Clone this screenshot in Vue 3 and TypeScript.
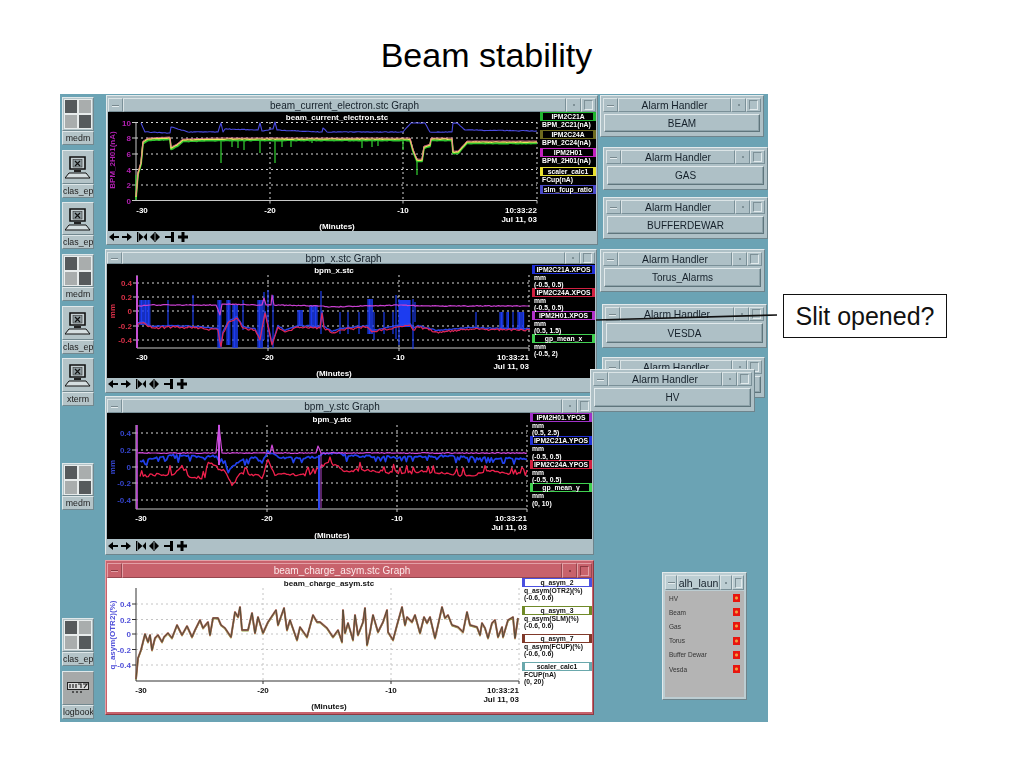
<template>
  <div class="page">
    <h1 class="heading">Beam stability</h1>

    <div class="desktop">
      <!-- desktop icons -->
      <div v-for="icon in icons" :key="icon.top" class="desk-icon" :style="place(62, icon.top, 32, icon.h)">
        <div class="icon-face" :class="icon.kind">
          <div v-if="icon.kind === 'medm'" class="medm-grid">
            <i class="dark"></i><i></i><i></i><i class="dark"></i>
          </div>
          <svg v-else-if="icon.kind === 'term'" width="26" height="26" viewBox="0 0 26 26">
            <path d="M5 3H20V15H5Z" fill="#c4cfd2" stroke="#111" stroke-width="1.6" />
            <rect x="8" y="5.5" width="9" height="7.5" fill="#8d9a9e" stroke="#333" stroke-width="0.6" />
            <path d="M10 7L15 12M15 7L10 12" stroke="#111" stroke-width="1.2" />
            <path d="M9 16H16V18H9Z" fill="#222" />
            <path d="M4 19H21L25 24H0Z" fill="#d5dee0" stroke="#111" stroke-width="1" />
          </svg>
          <svg v-else width="22" height="12" viewBox="0 0 22 12">
            <rect x="0.5" y="0.5" width="21" height="7" fill="#d8d8d8" stroke="#222" />
            <path d="M3 2V6M6 2V6M9 2V6M11 2H14V6M16 2H20L17 6" fill="none" stroke="#222" stroke-width="1.2" />
            <path d="M5 10H7M9 10H11M13 10H15" stroke="#333" stroke-width="1.4" />
          </svg>
        </div>
        <div class="icon-label">{{ icon.label }}</div>
      </div>

      <!-- strip chart windows -->
      <div
        v-for="g in graphs"
        :key="g.title"
        class="window graph"
        :class="{ alert: g.alert }"
        :style="place(g.box[0], g.box[1], g.box[2], g.box[3])"
      >
        <div class="titlebar" :style="{ height: g.titleH + 'px' }">
          <span class="wm-btn menu"><i></i></span>
          <span class="wm-title">{{ g.title }}</span>
          <span class="wm-btn dot"><i></i></span>
          <span class="wm-btn max"><i></i></span>
        </div>

        <div class="plot-row" :class="{ light: g.alert }" :style="{ height: g.view[3] + 'px' }">
          <svg
            class="chart"
            :width="g.view[2]"
            :height="g.view[3]"
            :viewBox="g.view.join(' ')"
          >
            <text class="chart-title" :x="g.titleAt[0]" :y="g.titleAt[1]">{{ g.chartTitle }}</text>
            <line
              v-for="t in g.yTicks"
              :key="t[0]"
              class="grid"
              :x1="g.axisX"
              :x2="g.right"
              :y1="t[1]"
              :y2="t[1]"
            />
            <line
              v-for="x in g.vLines"
              :key="x"
              class="grid"
              :x1="x"
              :x2="x"
              :y1="g.top"
              :y2="g.bottom"
            />
            <line class="axis" :x1="g.axisX" :x2="g.axisX" :y1="g.top" :y2="g.bottom" />
            <line class="axis" :x1="g.axisX" :x2="g.right" :y1="g.bottom" :y2="g.bottom" />
            <line
              v-for="t in g.yTicks"
              :key="'m' + t[0]"
              class="axis"
              :x1="g.axisX - 4"
              :x2="g.axisX"
              :y1="t[1]"
              :y2="t[1]"
            />
            <line
              v-for="x in g.vLines"
              :key="'b' + x"
              class="axis"
              :x1="x"
              :x2="x"
              :y1="g.bottom"
              :y2="g.bottom + 3"
            />
            <path
              v-for="(tr, i) in g.traces"
              :key="i"
              :d="tr.d"
              :stroke="tr.color"
              :stroke-width="tr.width"
              fill="none"
              stroke-linejoin="round"
            />
            <text
              v-for="t in g.yTicks"
              :key="'l' + t[0]"
              class="y-label"
              :x="g.axisX - 5"
              :y="t[1] + 3"
              :style="{ fill: g.axisColor }"
            >{{ t[0] }}</text>
            <text
              class="axis-name"
              :style="{ fill: g.axisColor }"
              :transform="`rotate(-90 ${g.axisName[1]} ${g.axisName[2]})`"
              :x="g.axisName[1]"
              :y="g.axisName[2]"
            >{{ g.axisName[0] }}</text>
            <text
              v-for="t in g.xLabels"
              :key="t[0]"
              class="x-label"
              :x="t[1]"
              :y="g.bottom + 12"
            >{{ t[0] }}</text>
            <text class="x-label" :x="g.titleAt[0]" :y="g.minutesY">(Minutes)</text>
            <text class="stamp" :x="g.right" :y="g.bottom + 12">{{ g.time }}</text>
            <text class="stamp" :x="g.right" :y="g.bottom + 21">Jul 11, 03</text>
          </svg>

          <ul class="legend" :style="{ paddingTop: g.legendTop + 'px' }">
            <li
              v-for="item in g.legend"
              :key="item.name"
              class="legend-item"
              :style="{ height: g.legendStep + 'px' }"
            >
              <div class="legend-box" :style="{ borderColor: item.color }">{{ item.name }}</div>
              <div v-for="l in item.lines" :key="l" class="legend-line">{{ l }}</div>
            </li>
          </ul>
        </div>

        <div v-if="!g.alert" class="toolbar">
          <svg v-for="(b, i) in toolButtons" :key="i" class="tool" :class="{ gap: i === 2 || i === 4 }" width="10" height="10" viewBox="0 0 10 10">
            <path :d="b" fill="#000" />
          </svg>
        </div>
      </div>

      <!-- alarm handler windows -->
      <div
        v-for="a in alarms"
        :key="a.label + a.box[1]"
        class="window alarm"
        :style="place(a.box[0], a.box[1], a.box[2], a.box[3])"
      >
        <div class="titlebar alarm-bar">
          <span class="wm-btn menu"><i></i></span>
          <span class="wm-title">Alarm Handler</span>
          <span class="wm-btn dot"><i></i></span>
          <span class="wm-btn max"><i></i></span>
        </div>
        <div class="alarm-button">{{ a.label }}</div>
      </div>

      <!-- launcher -->
      <div class="window launcher" :style="place(662, 572, 85, 128)">
        <div class="titlebar launcher-bar">
          <span class="wm-btn menu"><i></i></span>
          <span class="wm-title">alh_laun</span>
          <span class="wm-btn dot"><i></i></span>
          <span class="wm-btn max"><i></i></span>
        </div>
        <div class="launcher-body">
          <div v-for="row in launcherRows" :key="row" class="launcher-row">
            <span>{{ row }}</span>
            <b class="led"></b>
          </div>
        </div>
      </div>
    </div>

    <!-- annotation on top of the picture -->
    <svg class="leader" width="182" height="10" viewBox="0 0 182 10">
      <line x1="0" y1="8" x2="181" y2="3" stroke="#111" stroke-width="1.6" />
    </svg>
    <div class="callout">Slit opened?</div>
  </div>
</template>

<script setup lang="ts">
type Pt = [number, number]

interface Trace {
  d: string
  color: string
  width: number
}

interface LegendItem {
  name: string
  color: string
  lines: string[]
}

interface Graph {
  title: string
  chartTitle: string
  box: number[]
  titleH: number
  view: number[]
  alert: boolean
  axisX: number
  top: number
  bottom: number
  right: number
  axisColor: string
  axisName: [string, number, number]
  yTicks: [string, number][]
  vLines: number[]
  xLabels: [string, number][]
  titleAt: Pt
  minutesY: number
  time: string
  legendTop: number
  legendStep: number
  legend: LegendItem[]
  traces: Trace[]
}

// desktop starts at 60,94 in the screenshot
function place(l: number, t: number, w: number, h: number) {
  return { left: l - 60 + 'px', top: t - 94 + 'px', width: w + 'px', height: h + 'px' }
}

function seeded(seed: number) {
  let s = seed * 7919
  return () => {
    s = (s * 16807) % 2147483647
    return s / 2147483647
  }
}

// polyline through keypoints with sampled noise; burst adds the odd short spike
function noisy(keys: Pt[], amp: number, seed: number, step = 1.5, dy = 0, burst = 0): string {
  const rnd = seeded(seed)
  let d = `M${keys[0][0]} ${keys[0][1] + dy}`
  for (let i = 1; i < keys.length; i++) {
    const [x0, y0] = keys[i - 1]
    const [x1, y1] = keys[i]
    const n = Math.max(1, Math.floor((x1 - x0) / step))
    for (let j = 1; j <= n; j++) {
      const f = j / n
      let y = y0 + (y1 - y0) * f + (j === n ? 0 : (rnd() - 0.5) * amp)
      if (burst && rnd() < 0.16) y -= burst * (0.4 + rnd() * 0.6)
      d += `L${(x0 + (x1 - x0) * f).toFixed(1)} ${(y + dy).toFixed(1)}`
    }
  }
  return d
}

function bars(list: number[][]): string {
  return list.map(([x, a, b]) => `M${x} ${a}V${b}`).join('')
}

function comb(from: number, to: number, a: number, b: number, step = 1.4): number[][] {
  const out: number[][] = []
  for (let x = from; x <= to; x += step) out.push([x, a, b])
  return out
}

const beamYellow: Pt[] = [
  [136, 197], [138, 173], [141, 163], [143, 142], [148, 139], [170, 138], [171, 148], [177, 145],
  [183, 140], [218, 139], [355, 139], [410, 139], [413, 150], [417, 160], [422, 160], [424, 147],
  [430, 145], [431, 139], [452, 139], [453, 152], [458, 152], [467, 142], [537, 142],
]
const beamBlue: Pt[] = [
  [141, 123], [145, 132], [170, 133], [171, 127], [175, 128], [188, 132], [218, 132], [221, 123],
  [223, 132], [225, 129], [258, 130], [260, 123], [262, 131], [273, 129], [275, 122], [277, 130],
  [322, 132], [323, 128], [327, 132], [403, 132], [411, 123], [413, 123], [425, 123], [430, 132],
  [452, 132], [453, 123], [457, 123], [465, 130], [537, 131],
]
const beamDrops = bars([
  [136, 175, 200], [221, 140, 163], [232, 140, 147], [238, 140, 148], [244, 140, 150], [260, 140, 153],
  [275, 140, 163], [282, 140, 147], [291, 140, 147], [312, 140, 143], [362, 140, 148], [372, 140, 147],
  [378, 140, 146], [403, 140, 150], [417, 158, 175],
])

const xRed: Pt[] = [
  [137, 325], [142, 323], [152, 328], [172, 327], [195, 328], [218, 330], [221, 347], [223, 333],
  [228, 323], [237, 318], [243, 328], [255, 330], [260, 340], [265, 313], [272, 345], [278, 327],
  [285, 332], [298, 327], [320, 328], [322, 313], [324, 328], [332, 333], [340, 330], [367, 327],
  [372, 332], [397, 327], [410, 325], [413, 330], [418, 327], [437, 332], [470, 329], [507, 330], [530, 330],
]
const xMagenta: Pt[] = [
  [138, 306], [150, 305], [216, 305], [220, 315], [222, 304], [262, 305], [264, 298], [266, 305],
  [271, 305], [272, 295], [274, 305], [320, 306], [330, 307], [400, 305], [420, 306], [529, 306],
]
const xBlueBars = bars([
  ...comb(140, 150, 300, 325), [168, 300, 325], [193, 295, 325], ...comb(218, 221, 300, 348),
  ...comb(227, 230, 300, 345), ...comb(233, 238, 305, 348), [243, 300, 330], ...comb(258, 263, 300, 348),
  [264, 292, 340], [268, 290, 348], [273, 295, 348], ...comb(298, 303, 310, 325), ...comb(310, 318, 305, 328),
  [321, 291, 334], [340, 312, 334], [348, 312, 334], [359, 312, 334], ...comb(368, 373, 299, 334),
  [374, 312, 340], [384, 312, 334], [393, 312, 334], [396, 295, 339], [399, 299, 345],
  ...comb(400, 410, 300, 327, 1), [413, 299, 349], [415, 302, 322], [476, 312, 327],
  ...comb(500, 503, 312, 330), ...comb(507, 509, 312, 330), [513, 312, 330], ...comb(518, 524, 312, 330),
])

const yRed: Pt[] = [
  [140, 475], [160, 473], [165, 474], [175, 472], [182, 464], [186, 475], [195, 476], [205, 476], [210, 462],
  [220, 468], [225, 470], [232, 484], [240, 472], [255, 473], [262, 477], [268, 458], [275, 474], [285, 472],
  [300, 473], [315, 472], [325, 462], [335, 463], [345, 470], [360, 468], [400, 472], [420, 470], [440, 472],
  [470, 474], [490, 470], [510, 472], [527, 473],
]
const yBlue: Pt[] = [
  [140, 462], [160, 458], [170, 456], [200, 458], [218, 457], [225, 462], [230, 470], [240, 462], [255, 458],
  [262, 464], [268, 452], [280, 459], [300, 459], [317, 458], [322, 455], [335, 454], [350, 457], [400, 458],
  [440, 457], [480, 459], [527, 460],
]
const yMagenta: Pt[] = [
  [138, 453], [216, 453], [219, 425], [222, 453], [270, 453], [272, 445], [274, 453], [316, 453], [318, 446],
  [321, 453], [527, 453],
]

const asym: Pt[] = [
  [136, 679], [138, 658], [141, 650], [145, 634], [148, 642], [150, 635], [152, 650], [155, 638], [158, 635],
  [162, 642], [164, 637], [168, 633], [172, 638], [177, 625], [182, 635], [187, 626], [192, 637], [195, 630],
  [200, 620], [203, 628], [208, 622], [210, 635], [213, 618], [218, 618], [221, 625], [225, 628], [231, 637],
  [235, 612], [238, 617], [240, 607], [242, 630], [248, 630], [252, 613], [255, 633], [258, 617], [263, 633],
  [268, 622], [276, 610], [278, 625], [284, 608], [287, 630], [290, 620], [297, 640], [300, 627], [307, 637],
  [313, 615], [317, 622], [320, 622], [327, 628], [333, 637], [338, 630], [342, 642], [343, 610], [345, 633],
  [348, 623], [353, 640], [355, 615], [358, 635], [363, 622], [365, 608], [367, 645], [370, 632], [373, 615],
  [378, 632], [383, 622], [387, 610], [388, 632], [393, 640], [397, 625], [402, 607], [405, 625], [407, 617],
  [412, 622], [415, 615], [420, 633], [424, 617], [427, 623], [430, 617], [435, 638], [438, 625], [442, 607],
  [445, 618], [448, 615], [452, 625], [458, 627], [463, 632], [467, 612], [470, 625], [477, 627], [480, 635],
  [482, 623], [485, 628], [488, 638], [492, 623], [495, 620], [498, 637], [502, 627], [503, 637], [508, 620],
  [513, 617], [515, 638], [518, 618],
]

const graphs: Graph[] = [
  {
    title: 'beam_current_electron.stc Graph',
    chartTitle: 'beam_current_electron.stc',
    box: [106, 95, 492, 150],
    titleH: 14,
    view: [108, 112, 432, 119],
    alert: false,
    axisX: 136,
    top: 122,
    bottom: 200.5,
    right: 537,
    axisColor: '#b020b0',
    axisName: ['BPM_2H01(nA)', 115, 160],
    yTicks: [['10', 122.5], ['8', 138], ['6', 154], ['4', 169.5], ['2', 185], ['0', 200.5]],
    vLines: [270, 403, 537],
    xLabels: [['-30', 142], ['-20', 270], ['-10', 403]],
    titleAt: [337, 120],
    minutesY: 229,
    time: '10:33:22',
    legendTop: 0,
    legendStep: 18.2,
    legend: [
      { name: 'IPM2C21A', color: '#1fb52f', lines: ['BPM_2C21(nA)'] },
      { name: 'IPM2C24A', color: '#6e6a1e', lines: ['BPM_2C24(nA)'] },
      { name: 'IPM2H01', color: '#c420c0', lines: ['BPM_2H01(nA)'] },
      { name: 'scaler_calc1', color: '#e8e030', lines: ['FCup(nA)'] },
      { name: 'slm_fcup_ratio', color: '#4a4ac8', lines: [] },
    ],
    traces: [
      { d: noisy(beamBlue, 0.7, 11), color: '#4b4be0', width: 1.1 },
      { d: beamDrops, color: '#2fc42f', width: 1.3 },
      { d: noisy(beamYellow, 0.6, 12, 1.5, 1.4), color: '#2fc42f', width: 1.8 },
      { d: noisy(beamYellow, 0.5, 13), color: '#e8e85a', width: 1.4 },
      { d: noisy(beamYellow, 0.3, 14, 2, -1), color: '#ef6f9a', width: 0.8 },
    ],
  },
  {
    title: 'bpm_x.stc Graph',
    chartTitle: 'bpm_x.stc',
    box: [105, 249, 492, 144],
    titleH: 12,
    view: [107, 264, 425, 114],
    alert: false,
    axisX: 137,
    top: 275,
    bottom: 348,
    right: 529,
    axisColor: '#d83048',
    axisName: ['mm', 115, 311],
    yTicks: [['0.4', 283], ['0.2', 297], ['0', 311], ['-0.2', 326], ['-0.4', 340]],
    vLines: [268, 399, 529],
    xLabels: [['-30', 142], ['-20', 268], ['-10', 399]],
    titleAt: [334, 273],
    minutesY: 376,
    time: '10:33:21',
    legendTop: 1,
    legendStep: 23,
    legend: [
      { name: 'IPM2C21A.XPOS', color: '#2030d8', lines: ['mm', '(-0.5, 0.5)'] },
      { name: 'IPM2C24A.XPOS', color: '#d02040', lines: ['mm', '(-0.5, 0.5)'] },
      { name: 'IPM2H01.XPOS', color: '#b030c8', lines: ['mm', '(0.5, 1.5)'] },
      { name: 'gp_mean_x', color: '#40d050', lines: ['mm', '(-0.5, 2)'] },
    ],
    traces: [
      { d: xBlueBars, color: '#1c3cf0', width: 1.2 },
      { d: noisy(xRed, 1, 21, 1.5, -1.5), color: '#2a44e8', width: 1.4 },
      { d: noisy(xRed, 2.4, 22), color: '#e0265a', width: 1.2 },
      { d: noisy(xMagenta, 0.8, 23), color: '#c840d0', width: 1.2 },
      { d: 'M137 276V348', color: '#d050e0', width: 1.8 },
    ],
  },
  {
    title: 'bpm_y.stc Graph',
    chartTitle: 'bpm_y.stc',
    box: [105, 396, 489, 159],
    titleH: 14,
    view: [107, 413, 423, 126],
    alert: false,
    axisX: 136,
    top: 425,
    bottom: 509,
    right: 527,
    axisColor: '#3444cc',
    axisName: ['mm', 115, 467],
    yTicks: [['0.4', 433], ['0.2', 450], ['0', 467], ['-0.2', 483], ['-0.4', 500]],
    vLines: [267, 397, 527],
    xLabels: [['-30', 141], ['-20', 267], ['-10', 397]],
    titleAt: [332, 422],
    minutesY: 538,
    time: '10:33:21',
    legendTop: 0,
    legendStep: 23.4,
    legend: [
      { name: 'IPM2H01.YPOS', color: '#a030c8', lines: ['mm', '(0.5, 2.5)'] },
      { name: 'IPM2C21A.YPOS', color: '#2030d8', lines: ['mm', '(-0.5, 0.5)'] },
      { name: 'IPM2C24A.YPOS', color: '#d02040', lines: ['mm', '(-0.5, 0.5)'] },
      { name: 'gp_mean_y', color: '#40d050', lines: ['mm', '(0, 10)'] },
    ],
    traces: [
      { d: noisy(yRed, 3, 31, 1.6, 1.5, 8), color: '#f0204c', width: 1.3 },
      { d: noisy(yBlue, 2.2, 32, 1.6, -1, -6), color: '#2040ee', width: 1.7 },
      { d: noisy(yMagenta, 0.8, 33), color: '#d048d8', width: 1.2 },
      { d: 'M137 425V509', color: '#c850e0', width: 1.6 },
      { d: 'M319 455V510', color: '#3048f0', width: 2 },
      { d: 'M321 453V508', color: '#c850e0', width: 0.9 },
      { d: 'M219 425V465', color: '#c850e0', width: 2 },
    ],
  },
  {
    title: 'beam_charge_asym.stc Graph',
    chartTitle: 'beam_charge_asym.stc',
    box: [105, 560, 489, 155],
    titleH: 15,
    view: [107, 578, 415, 134],
    alert: true,
    axisX: 136,
    top: 588,
    bottom: 681,
    right: 519,
    axisColor: '#5050d8',
    axisName: ['q_asym(OTR2)(%)', 115, 635],
    yTicks: [['0.4', 604], ['0.2', 619.5], ['0', 634], ['-0.2', 649.5], ['-0.4', 665]],
    vLines: [263, 391, 519],
    xLabels: [['-30', 141], ['-20', 263], ['-10', 391]],
    titleAt: [329, 586],
    minutesY: 709,
    time: '10:33:21',
    legendTop: 0,
    legendStep: 28,
    legend: [
      { name: 'q_asym_2', color: '#4a50e0', lines: ['q_asym(OTR2)(%)', '(-0.6, 0.6)'] },
      { name: 'q_asym_3', color: '#708a28', lines: ['q_asym(SLM)(%)', '(-0.6, 0.6)'] },
      { name: 'q_asym_7', color: '#80392a', lines: ['q_asym(FCUP)(%)', '(-0.6, 0.6)'] },
      { name: 'scaler_calc1', color: '#6aa8ac', lines: ['FCUP(nA)', '(0, 20)'] },
    ],
    traces: [
      { d: noisy(asym, 0, 41, 3, 0.7), color: '#8fa03c', width: 1.6 },
      { d: noisy(asym, 0, 42, 3), color: '#b0695a', width: 2 },
      { d: noisy(asym, 0, 43, 3), color: '#4a4a36', width: 0.9 },
    ],
  },
]

const icons = [
  { kind: 'medm', label: 'medm', top: 97, h: 48 },
  { kind: 'term', label: 'clas_ep', top: 150, h: 48 },
  { kind: 'term', label: 'clas_ep', top: 202, h: 47 },
  { kind: 'medm', label: 'medm', top: 254, h: 47 },
  { kind: 'term', label: 'clas_ep', top: 306, h: 48 },
  { kind: 'term', label: 'xterm', top: 358, h: 48 },
  { kind: 'medm', label: 'medm', top: 463, h: 47 },
  { kind: 'medm', label: 'clas_ep', top: 618, h: 48 },
  { kind: 'book', label: 'logbook', top: 671, h: 48 },
]

const alarms = [
  { label: 'BEAM', box: [600, 95, 164, 42] },
  { label: 'GAS', box: [603, 147, 165, 43] },
  { label: 'BUFFERDEWAR', box: [603, 197, 165, 42] },
  { label: 'Torus_Alarms', box: [600, 249, 165, 43] },
  { label: 'VESDA', box: [602, 304, 165, 44] },
  { label: '', box: [602, 357, 163, 41] },
  { label: 'HV', box: [590, 369, 165, 43] },
]

const launcherRows = ['HV', 'Beam', 'Gas', 'Torus', 'Buffer Dewar', 'Vesda']

// left, right, zoom in, zoom out, shrink, grow
const toolButtons = [
  'M0 5L5 1V4H10V6H5V9Z',
  'M10 5L5 1V4H0V6H5V9Z',
  'M0 0V10H1.4V0ZM2 1L6.5 5L2 9ZM10 1V9L6.5 5Z',
  'M4 1V9L0 5ZM6 1V9L10 5ZM4.4 0H5.6V10H4.4Z',
  'M0 4H6V0H9V10H6V6H0Z',
  'M3.5 0H6.5V3.5H10V6.5H6.5V10H3.5V6.5H0V3.5H3.5Z',
]
</script>

<style scoped>
.page {
  position: relative;
  width: 1024px;
  height: 768px;
  overflow: hidden;
  background: #fff;
  font-family: "Liberation Sans", Arial, sans-serif;
}

.heading {
  box-sizing: border-box;
  height: 94px;
  margin: 0;
  padding: 36px 51px 0 0;
  font-size: 34px;
  font-weight: 400;
  line-height: 38px;
  text-align: center;
  color: #000;
}

.desktop {
  position: relative;
  width: 708px;
  height: 628px;
  margin-left: 60px;
  overflow: hidden;
  background: #6ba3b4;
  filter: blur(0.45px);
}

/* icons */
.desk-icon {
  position: absolute;
  display: flex;
  flex-direction: column;
}

.icon-face {
  display: flex;
  flex: 1;
  align-items: center;
  justify-content: center;
  background: #b4c4c8;
  border: 1px solid;
  border-color: #dfe8ea #72888f #72888f #dfe8ea;
}

.icon-face.book {
  background: #a6a9a9;
}

.medm-grid {
  display: grid;
  grid-template-columns: 12px 12px;
  grid-auto-rows: 13px;
  gap: 2px;
  padding: 1px;
  background: #e8ecec;
}

.medm-grid i {
  background: #a9adad;
}

.medm-grid i.dark {
  background: #565a5c;
}

.icon-label {
  height: 12px;
  overflow: hidden;
  font-size: 8.8px;
  line-height: 12px;
  text-align: center;
  white-space: nowrap;
  color: #222;
  background: #b4c4c8;
  border: 1px solid;
  border-color: #dfe8ea #72888f #72888f #dfe8ea;
}

/* window frame */
.window {
  position: absolute;
  box-sizing: border-box;
  display: flex;
  flex-direction: column;
  padding: 2px;
  background: #aec0c6;
  border-top: 1px solid #e2eaec;
  border-left: 1px solid #e2eaec;
  border-right: 1px solid #6e848c;
  border-bottom: 1px solid #6e848c;
}

.graph {
  padding: 2px 1px;
}

.titlebar {
  display: flex;
  flex-shrink: 0;
  align-items: stretch;
  font-size: 10px;
  color: #15202a;
}

.wm-btn {
  display: flex;
  flex-shrink: 0;
  align-items: center;
  justify-content: center;
  width: 13px;
  border: 1px solid;
  border-color: #dbe4e6 #7a9098 #7a9098 #dbe4e6;
}

.wm-title {
  display: flex;
  flex: 1;
  min-width: 0;
  align-items: center;
  justify-content: center;
  white-space: nowrap;
  border: 1px solid;
  border-color: #dbe4e6 #7a9098 #7a9098 #dbe4e6;
}

.wm-btn.menu i {
  width: 7px;
  height: 1px;
  background: #78888e;
  box-shadow: 0 1px 0 #e4ecee;
}

.wm-btn.dot i {
  width: 2px;
  height: 2px;
  background: #7e9096;
}

.wm-btn.max i {
  width: 7px;
  height: 8px;
  border: 1px solid;
  border-color: #7d9097 #e2eaec #e2eaec #7d9097;
}

/* graph windows */
.plot-row {
  display: flex;
  flex-shrink: 0;
  background: #000;
  color: #fff;
}

.plot-row.light {
  background: #fff;
  color: #111;
}

.chart {
  display: block;
  flex-shrink: 0;
  font-size: 8px;
  font-weight: 700;
}

.chart text {
  fill: #fff;
}

.light .chart text {
  fill: #111;
}

.chart-title,
.x-label,
.axis-name {
  text-anchor: middle;
}

.y-label,
.stamp {
  text-anchor: end;
}

.grid {
  stroke: #d8d8d8;
  stroke-width: 1;
  stroke-dasharray: 2 3;
}

.light .grid {
  stroke: #c4c4c4;
}

.axis {
  stroke: #c8c8c8;
  stroke-width: 1;
}

.light .axis {
  stroke: #333;
}

.legend {
  flex: 1;
  min-width: 0;
  margin: 0;
  padding: 0;
  list-style: none;
  font-size: 6.8px;
  font-weight: 700;
  line-height: 7.4px;
}

.legend-box {
  box-sizing: border-box;
  height: 9px;
  line-height: 7px;
  text-align: center;
  white-space: nowrap;
  border-style: solid;
  border-width: 1px 3px;
}

.legend-line {
  padding-left: 2px;
  white-space: nowrap;
}

.toolbar {
  display: flex;
  flex: 1;
  align-items: center;
  gap: 3px;
  padding-left: 1px;
}

.tool {
  flex-shrink: 0;
}

.tool.gap {
  margin-left: 2px;
}

.graph.alert {
  background: #c8626c;
  border-color: #e3a0a6 #8c3a42 #8c3a42 #e3a0a6;
}

.alert .titlebar {
  color: #fbe9ea;
}

.alert .wm-btn,
.alert .wm-title {
  border-color: #e3a0a6 #96474f #96474f #e3a0a6;
}

.alert .wm-btn.menu i {
  background: #8c3a42;
  box-shadow: 0 1px 0 #e3a0a6;
}

.alert .wm-btn.dot i {
  background: #8c3a42;
}

.alert .wm-btn.max i {
  border-color: #8c3a42 #e3a0a6 #e3a0a6 #8c3a42;
}

/* alarm handlers */
.alarm {
  gap: 2px;
}

.alarm-bar {
  height: 14px;
  font-size: 10.3px;
}

.alarm-button {
  flex: 1;
  margin: 0 1px 2px;
  display: flex;
  align-items: center;
  justify-content: center;
  font-size: 10px;
  color: #15202a;
  border: 1px solid;
  border-color: #e2eaec #5f757c #5f757c #e2eaec;
  box-shadow: inset -1px -1px 0 #8ea3aa;
}

/* launcher */
.launcher {
  background: #bccdd2;
}

.launcher-bar {
  height: 15px;
  font-size: 10.5px;
}

.launcher-bar .wm-btn {
  width: 10px;
}

.launcher-bar .wm-btn.max i {
  width: 5px;
}

.launcher-body {
  flex: 1;
  margin-top: 1px;
  padding: 0 4px;
  background: #b4b4b4;
}

.launcher-row {
  display: flex;
  align-items: center;
  justify-content: space-between;
  height: 14.2px;
  font-size: 6.5px;
  color: #333;
}

.led {
  width: 7px;
  height: 8px;
  background: radial-gradient(circle, #f5a040 1px, #e8150f 2px);
}

/* annotation */
.leader {
  position: absolute;
  left: 596px;
  top: 312px;
}

.callout {
  position: absolute;
  left: 783px;
  top: 294px;
  box-sizing: border-box;
  width: 164px;
  height: 44px;
  font-size: 25px;
  line-height: 42px;
  text-align: center;
  color: #111;
  background: #fff;
  border: 1px solid #111;
}
</style>

<style>
body {
  background: #fff;
}
</style>
